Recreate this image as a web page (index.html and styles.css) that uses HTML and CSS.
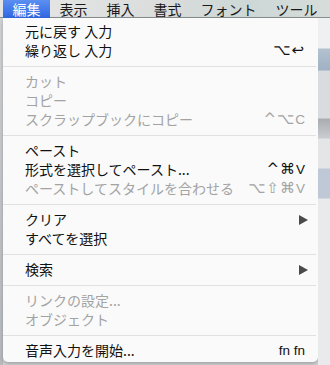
FILE: index.html
```html
<!DOCTYPE html>
<html lang="ja">
<head>
    <meta charset="UTF-8">
    <meta name="viewport" content="width=device-width, initial-scale=1.0">
    <title>編集メニュー</title>
    <link rel="stylesheet" href="styles.css">
</head>
<body>

<div class="menubar">
    <span class="menubar-item active">編集</span>
    <span class="menubar-item">表示</span>
    <span class="menubar-item">挿入</span>
    <span class="menubar-item">書式</span>
    <span class="menubar-item">フォント</span>
    <span class="menubar-item">ツール</span>
</div>

<div class="workspace">
    <div class="gutter"></div>

    <ul class="menu">
        <li class="menu-item"><span>元に戻す 入力</span></li>
        <li class="menu-item"><span>繰り返し 入力</span><span class="shortcut"><span class="sym">⌥↩</span></span></li>
        <li class="separator"></li>
        <li class="menu-item disabled"><span>カット</span></li>
        <li class="menu-item disabled"><span>コピー</span></li>
        <li class="menu-item disabled"><span>スクラップブックにコピー</span><span class="shortcut"><span class="sym">^⌥</span>C</span></li>
        <li class="separator"></li>
        <li class="menu-item"><span>ペースト</span></li>
        <li class="menu-item"><span>形式を選択してペースト...</span><span class="shortcut"><span class="sym">^⌘</span>V</span></li>
        <li class="menu-item disabled"><span>ペーストしてスタイルを合わせる</span><span class="shortcut"><span class="sym">⌥⇧⌘</span>V</span></li>
        <li class="separator"></li>
        <li class="menu-item">
            <span>クリア</span>
            <svg class="arrow" width="9" height="10" viewBox="0 0 9 10"><polygon points="0,0 9,5 0,10" /></svg>
        </li>
        <li class="menu-item"><span>すべてを選択</span></li>
        <li class="separator"></li>
        <li class="menu-item">
            <span>検索</span>
            <svg class="arrow" width="9" height="10" viewBox="0 0 9 10"><polygon points="0,0 9,5 0,10" /></svg>
        </li>
        <li class="separator"></li>
        <li class="menu-item disabled"><span>リンクの設定...</span></li>
        <li class="menu-item disabled"><span>オブジェクト</span></li>
        <li class="separator"></li>
        <li class="menu-item"><span>音声入力を開始...</span><span class="shortcut">fn fn</span></li>
    </ul>

    <div class="backdrop"></div>
</div>

</body>
</html>
```

FILE: styles.css
```css
/* Reset dasar */
* {
    margin: 0;
    padding: 0;
    box-sizing: border-box;
}

body {
    width: 330px;
    height: 365px;
    overflow: hidden;
    background-color: #d4d6d9;
    font-family: "Noto Sans CJK JP", "Noto Sans", sans-serif;
    color: #111;
}

/* Menu bar atas */
.menubar {
    height: 18px;
    display: flex;
    align-items: center;
    padding-left: 3px;
    background: linear-gradient(to right, #e6e6e6 0%, #dcdedd 45%, #cdd8d6 75%, #d6dcda 100%);
    border-bottom: 1px solid #8a8f90;
    font-size: 14px;
    line-height: 18px;
}

.menubar-item {
    padding: 0 9.5px;
    height: 18px;
    color: #1a1a1a;
}

.menubar-item.active {
    color: #fff;
    background: linear-gradient(#5c8ff2, #2f67e2);
}

/* Area kerja */
.workspace {
    display: flex;
    height: 347px;
}

.gutter {
    width: 3px;
    background: linear-gradient(#d2d4d6, #b9bcbf);
}

.backdrop {
    flex: 1;
    background: linear-gradient(
        #eef0f1 0px,
        #eef0f1 30px,
        #b3c1cf 31px,
        #9fb1c3 52px,
        #d9dcdf 53px,
        #d9dcdf 100px,
        #a9adb2 101px,
        #c9ccd0 120px,
        #e3e5e7 121px,
        #e3e5e7 150px,
        #bfc8d6 151px,
        #bfc8d6 180px,
        #e9eaeb 181px
    );
}

/* Dropdown */
.menu {
    list-style: none;
    width: 315px;
    height: 344px;
    padding-top: 4px;
    background-color: #fafafa;
    border-radius: 0 0 5px 5px;
    box-shadow: 0 2px 4px rgba(0, 0, 0, 0.25);
}

.menu-item {
    display: flex;
    align-items: center;
    justify-content: space-between;
    height: 19px;
    padding: 0 10px 0 22px;
    font-size: 14px;
    line-height: 19px;
    white-space: nowrap;
}

.menu-item.disabled {
    color: #a3a3a3;
}

.shortcut {
    font-family: "Liberation Sans", "DejaVu Sans", sans-serif;
    font-size: 13.5px;
    padding-right: 3px;
}

.sym {
    font-family: "DejaVu Sans", sans-serif;
    font-size: 15px;
    letter-spacing: 1px;
}

.arrow {
    fill: #4a4a4a;
}

.separator {
    height: 12px;
    display: flex;
    align-items: center;
    padding: 0 2px 0 0;
}

.separator::after {
    content: "";
    flex: 1;
    height: 1px;
    background-color: #e1e1e1;
}
```
